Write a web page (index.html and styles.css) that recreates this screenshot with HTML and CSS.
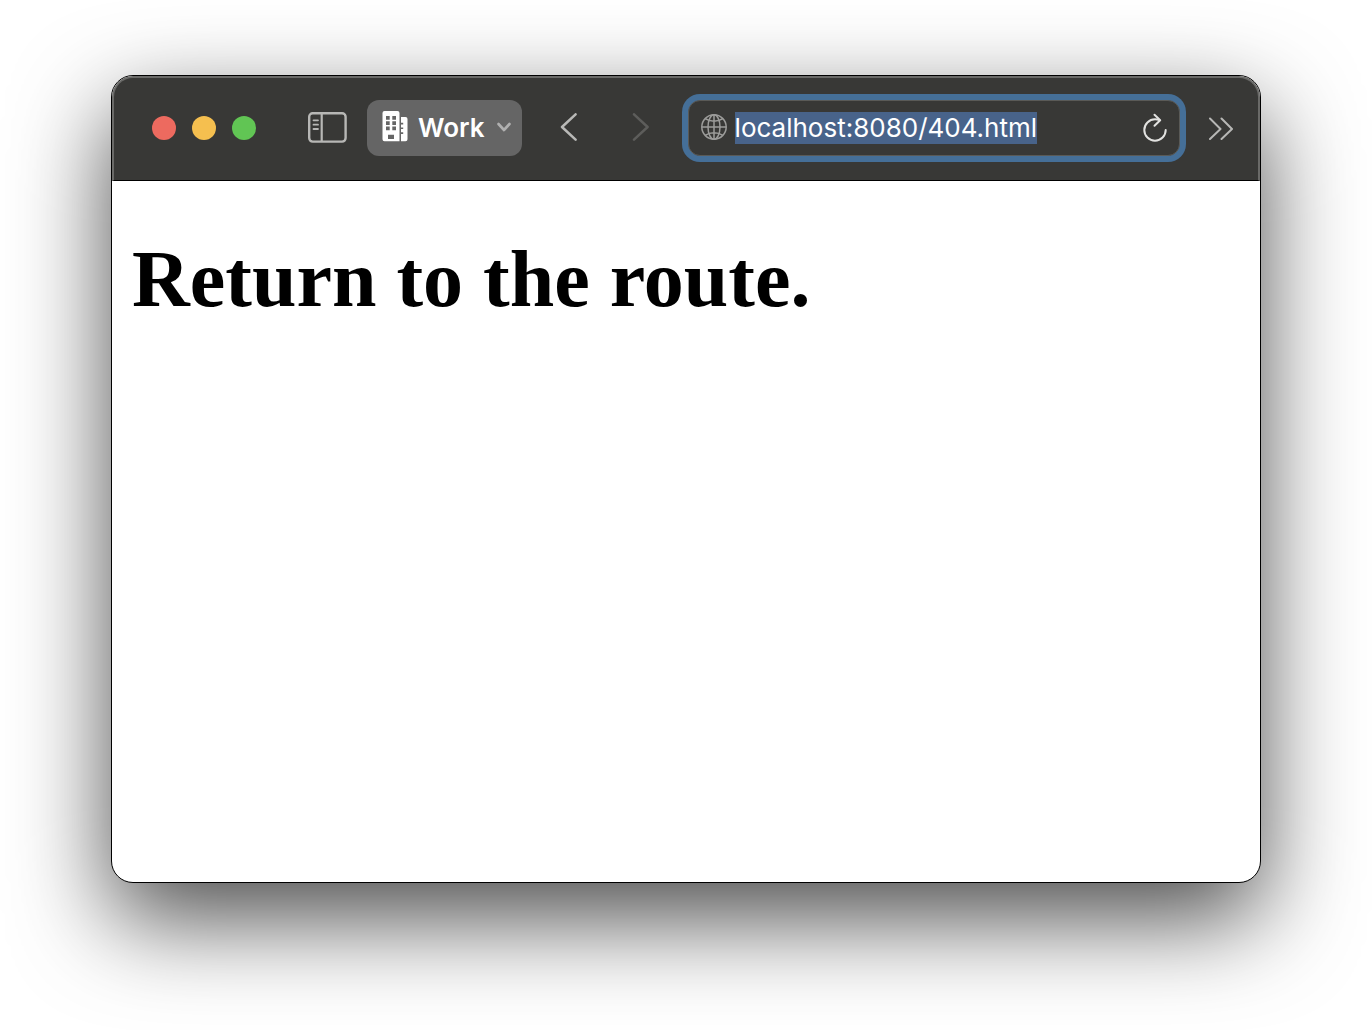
FILE: index.html
```html
<!DOCTYPE html>
<html lang="en">
<head>
    <meta charset="utf-8">
    <title>localhost:8080/404.html</title>
    <link rel="stylesheet" href="styles.css">
</head>
<body>
    <div class="window">
        <div class="toolbar">
            <div class="lights">
                <button class="light close" aria-label="Close"></button>
                <button class="light minimize" aria-label="Minimize"></button>
                <button class="light zoom" aria-label="Zoom"></button>
            </div>

            <button class="sidebar" aria-label="Show sidebar">
                <svg width="40" height="32" viewBox="0 0 40 32" fill="none" stroke="#b7b7b5">
                    <rect x="2.2" y="1.2" width="36.4" height="28.400" rx="3.5" stroke-width="2.4"/>
                    <path d="M14.700 1v28" stroke-width="2.2"/>
                    <path d="M6.500 8.300H11M6.500 12.700H11M6.500 17H11" stroke-width="1.8" stroke-linecap="round"/>
                </svg>
            </button>

            <button class="profile">
                <svg width="26" height="32" viewBox="0 0 26 32">
                    <path fill="#fff" fill-rule="evenodd" d="M2.500 0h13a2 2 0 0 1 2 2v28.300h-15a2 2 0 0 1-2-2V2a2 2 0 0 1 2-2zM4 5v3.700h3.700V5zM10.300 5v3.700H14V5zM4 10.300V14h3.700v-3.700zM10.300 10.300V14H14v-3.700zM4 15.600v3.700h3.700v-3.700zM10.300 15.600v3.700H14v-3.700zM6 23.800V28h6v-4.200z"/>
                    <path fill="#fff" d="M19 6h4.500a2 2 0 0 1 2 2v20.300a2 2 0 0 1-2 2H19v-7.300h2.200v-1.700H19v-3.200h2.200v-1.700H19v-2.900h2.200v-1.700H19z"/>
                </svg>
                <span>Work</span>
                <svg width="14" height="10" viewBox="0 0 14 10" fill="none" stroke="#b0b0b0" stroke-width="2.600" stroke-linecap="round" stroke-linejoin="round">
                    <path d="M1.500 2L7 8l5.500-6"/>
                </svg>
            </button>

            <div class="history">
                <button aria-label="Back">
                    <svg width="18" height="30" viewBox="0 0 18 30" fill="none" stroke="#b9b9b7" stroke-width="2.500" stroke-linecap="round" stroke-linejoin="round">
                        <path d="M15.600 1.300L2 14l13.600 12.700"/>
                    </svg>
                </button>
                <button aria-label="Forward">
                    <svg width="18" height="30" viewBox="0 0 18 30" fill="none" stroke="#5d5d5b" stroke-width="2.500" stroke-linecap="round" stroke-linejoin="round">
                        <path d="M2 1.300L15.600 14 2 26.700"/>
                    </svg>
                </button>
            </div>

            <div class="address">
                <svg width="26" height="28" viewBox="0 0 26 28" fill="none" stroke="#9c9c9a" stroke-width="1.500">
                    <circle cx="13" cy="13" r="12.200"/>
                    <ellipse cx="13" cy="13" rx="6" ry="12.200"/>
                    <path d="M13 .8v24.400M.8 13h24.400M4.200 4.700c5 3.400 12.600 3.400 17.600 0M4.200 21.300c5-3.400 12.600-3.400 17.600 0"/>
                </svg>
                <input type="text" id="url" value="localhost:8080/404.html" aria-label="Address" spellcheck="false">
                <button aria-label="Reload">
                    <svg width="24" height="30" viewBox="0 0 24 30" fill="none" stroke="#e2e2e0" stroke-width="2" stroke-linecap="round" stroke-linejoin="round">
                        <path d="M22.700 17A10.700 10.700 0 1 1 12 6.300c1.500 0 3 .2 4.300.7"/>
                        <path d="M11.500 1.800l5.700 5.400-5.700 5.600"/>
                    </svg>
                </button>
            </div>

            <button class="more" aria-label="More">
                <svg width="26" height="24" viewBox="0 0 26 24" fill="none" stroke="#b7b7b5" stroke-width="2" stroke-linecap="round" stroke-linejoin="round">
                    <path d="M2 2.500L12.500 13 2 23M13.500 2.500L24 13 13.500 23"/>
                </svg>
            </button>
        </div>

        <div class="page">
            <h1>Return to the route.</h1>
        </div>
    </div>
    <script>
        // the address starts out focused with everything selected
        var url = document.getElementById("url");
        url.focus();
        url.select();
    </script>
</body>
</html>
```
FILE: styles.css
```css
* {
    margin: 0;
    padding: 0;
    box-sizing: border-box;
}

body {
    display: flex;
    min-height: 100vh;
    padding: 75px 111px 147px;
    background: #fff;
}

button {
    border: 0;
    background: none;
    color: inherit;
    font: inherit;
}

svg {
    display: block;
    flex: none;
}

.window {
    flex: 1;
    display: flex;
    flex-direction: column;
    min-width: 0;
    border: 1px solid #000;
    border-radius: 22px;
    background: #fff;
    box-shadow: 0 36px 96px rgba(0, 0, 0, 0.7);
}

.toolbar {
    display: flex;
    align-items: center;
    height: 105px;
    padding: 0 24px 2px 38px;
    border: 2px solid #6a6a68;
    border-bottom: 1px solid #000;
    border-radius: 21px 21px 0 0;
    background: #383836;
    font-family: Inter, "Liberation Sans", sans-serif;
    font-size: 26px;
    color: #fff;
}

.lights {
    display: flex;
    gap: 16px;
    margin-right: 51px;
}

.light {
    width: 24px;
    height: 24px;
    border-radius: 50%;
}

.close {
    background: #ed6a5f;
}

.minimize {
    background: #f5bf4f;
}

.zoom {
    background: #61c554;
}

.profile {
    display: flex;
    align-items: center;
    height: 56px;
    margin: 0 38px 0 20px;
    padding: 0 11px 2px 15px;
    border-radius: 12px;
    background: #656565;
    font-weight: 600;
}

.profile span {
    margin: 0 12px 0 10px;
}

.history {
    display: flex;
    gap: 54px;
    margin-right: 38px;
}

.address {
    flex: 1;
    display: flex;
    align-items: center;
    min-width: 0;
    height: 56px;
    padding: 0 12px;
    border: 1px solid #5a5a57;
    border-radius: 12px;
    background: #383836;
    box-shadow: 0 0 0 6px #456f98;
}

.address input {
    flex: 1;
    min-width: 0;
    height: 32px;
    margin: 0 8px;
    border: 0;
    outline: 0;
    background: transparent;
    color: #fff;
    font: inherit;
    line-height: 32px;
}

.address input::selection {
    background: #48638a;
    color: #fff;
}

.more {
    margin-left: 28px;
}

.page {
    flex: 1;
    padding: 52px 20px;
}

h1 {
    font: bold 80px/92px "Liberation Serif", "Times New Roman", serif;
    color: #000;
}
```
